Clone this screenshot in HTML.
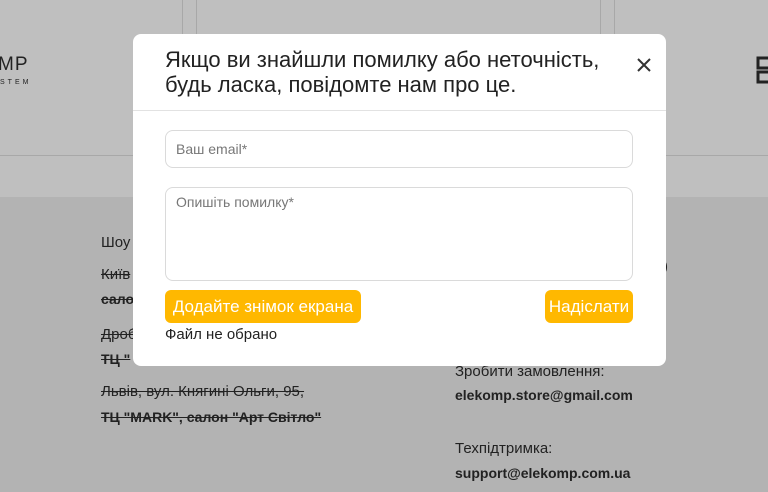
<!DOCTYPE html>
<html><head><meta charset="utf-8"><style>
body{margin:0;width:768px;height:492px;overflow:hidden;position:relative;font-family:"Liberation Sans",sans-serif;background:#b3b3b3}
.top{position:absolute;left:0;top:0;width:768px;height:197px;background:#bfbfbf}
.v{position:absolute;top:0;height:155px;width:1px;background:#a8a8a8}
.h{position:absolute;left:0;top:155px;width:768px;height:1px;background:#a8a8a8}
.t{position:absolute;font-size:15px;color:#222;white-space:nowrap}
.s{text-decoration:line-through}
.b{font-weight:bold;font-size:14px}
.modal{position:absolute;left:133px;top:34px;width:533px;height:332px;background:#fff;border-radius:8px}
.title{position:absolute;left:32px;top:13px;font-size:22px;line-height:25px;color:#222;white-space:nowrap}
.div{position:absolute;left:0;top:76px;width:533px;height:1px;background:#e2e2e2}
.in{position:absolute;left:32px;width:468px;border:1px solid #dadada;border-radius:8px;color:#777;font-size:14px;box-sizing:border-box;padding-left:10px}
.btn{position:absolute;top:256px;height:33px;background:#ffb800;border-radius:6px;color:#fff;font-size:17px;line-height:33px;padding:0;text-align:center;box-sizing:border-box;white-space:nowrap}
</style></head><body>
<div class="top"></div>
<div class="v" style="left:182px"></div><div class="v" style="left:196px"></div>
<div class="v" style="left:600px"></div><div class="v" style="left:614px"></div>
<div class="h"></div>
<div class="t" style="left:-2px;top:54px;font-size:19px;letter-spacing:1px">MP</div>
<div class="t" style="left:0;top:79px;font-size:7px;letter-spacing:3px">STEM</div>
<svg style="position:absolute;left:756px;top:56px" width="12" height="28" viewBox="0 0 12 28"><path d="M12 2H2V12H12M12 16H2V26H12" stroke="#222" stroke-width="3" fill="none"/></svg>
<div class="t" style="left:101px;top:234px">Шоу</div>
<div class="t s" style="left:101px;top:266px">Київ</div>
<div class="t s b" style="left:101px;top:291px">салон</div>
<div class="t s" style="left:101px;top:326px">Дроб</div>
<div class="t s b" style="left:101px;top:351px">ТЦ "</div>
<div class="t s" style="left:101px;top:383px">Львів, вул. Княгині Ольги, 95,</div>
<div class="t s b" style="left:101px;top:409px">ТЦ "MARK", салон "Арт Світло"</div>
<div class="t" style="left:663px;top:258px">)</div>
<div class="t" style="left:455px;top:363px">Зробити замовлення:</div>
<div class="t b" style="left:455px;top:387px">elekomp.store@gmail.com</div>
<div class="t" style="left:455px;top:440px">Техпідтримка:</div>
<div class="t b" style="left:455px;top:465px">support@elekomp.com.ua</div>
<div class="modal">
<div class="title">Якщо ви знайшли помилку або неточність,<br>будь ласка, повідомте нам про це.</div>
<svg style="position:absolute;left:504px;top:24px" width="14" height="14" viewBox="0 0 14 14"><path d="M1 1L13 13M13 1L1 13" stroke="#333" stroke-width="2"/></svg>
<div class="div"></div>
<div class="in" style="top:96px;height:38px;line-height:36px">Ваш email*</div>
<div class="in" style="top:153px;height:94px;padding-top:6px">Опишіть помилку*</div>
<div class="btn" style="left:32px;width:196px">Додайте знімок екрана</div>
<div class="btn" style="left:412px;width:88px">Надіслати</div>
<div style="position:absolute;left:32px;top:292px;font-size:15px;color:#222">Файл не обрано</div>
</div>
</body></html>
